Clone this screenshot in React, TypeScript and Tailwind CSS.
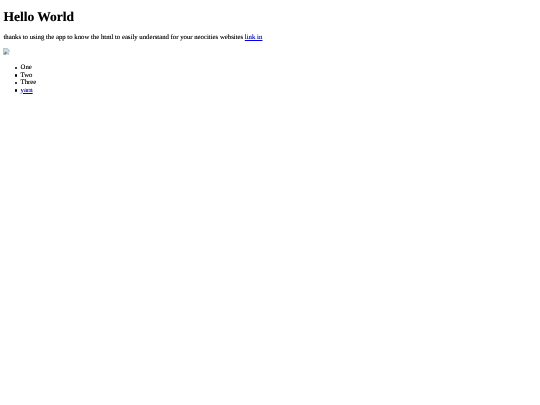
function Dot() {
  return <span className="w-[2.4px] h-[2.4px] rounded-full bg-black mr-[3.4px] shrink-0" />;
}

export default function App() {
  return (
    <div className="bg-white text-black px-[3.4px] pt-[9.2px] text-[6.75px] leading-[7.6px] min-h-[405px] [text-rendering:geometricPrecision] blur-[0.2px] [text-shadow:0_0_0.2px_rgba(0,0,0,0.5)]" style={{ fontFamily: '"Liberation Serif", serif' }}>
      <h1 className="text-[13.5px] leading-[15.5px] font-bold">Hello World</h1>
      <p className="mt-[9.6px]">thanks to using the app to know the html to easily understand for your neocities websites <a href="#" className="text-[#0000ee] underline">link in</a></p>
      <svg className="mt-[6.4px] block" width="7" height="7" viewBox="0 0 16 16">
        <path d="M1 1h9l4 4v3L9 13l-2 2H1z" fill="#cfd9e6" stroke="#98a4b4" strokeWidth="1.4" />
        <path d="M2 13l4-5 3 3-3 3H2z" fill="#4f9a4f" />
        <path d="M11 11l4 4h-5z" fill="#86a8d0" />
      </svg>
      <ul className="mt-[8.8px] pl-[11.4px]">
        <li className="flex items-center"><Dot />One</li>
        <li className="flex items-center"><Dot />Two</li>
        <li className="flex items-center"><Dot />Three</li>
        <li className="flex items-center"><Dot /><a href="#" className="text-[#0000ee] underline">yarn</a></li>
      </ul>
    </div>
  );
}
